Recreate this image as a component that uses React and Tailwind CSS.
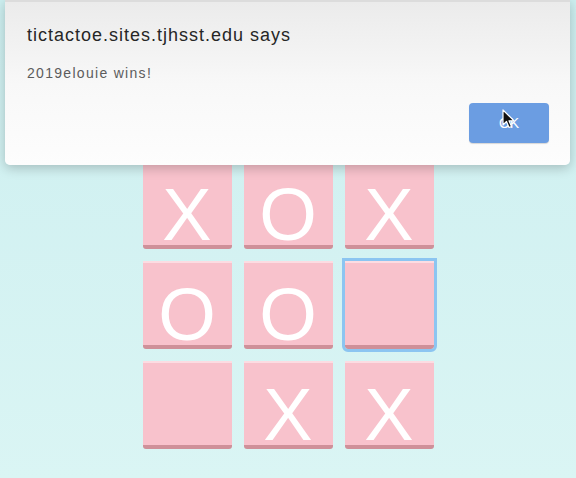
import React from 'react'

const BOARD = ['X', 'O', 'X', 'O', 'O', '', '', 'X', 'X']
const FOCUSED = 5

function Cell({ mark, focused }) {
  return (
    <button
      className={`w-[89px] h-[88px] flex justify-center bg-[#f8c2cc] border-t-2 border-t-[#fcdce2] border-b-4 border-b-[#cf9099] rounded-b-[3px] ${focused ? 'outline-[3px] outline-solid outline-[#8cc5f1]' : ''}`}
    >
      <span className="pt-[15px] text-[74px] leading-none text-white" style={{ fontFamily: '"Liberation Sans", Arial, sans-serif' }}>
        {mark}
      </span>
    </button>
  )
}

function Cursor() {
  return (
    <svg className="absolute left-[502px] top-[109px]" width="14" height="21" viewBox="0 0 14 21">
      <path d="M1 1 L1 16 L4.5 12.5 L7 18.5 L9.5 17.5 L7 11.8 L12 11.8 Z" fill="#111" stroke="#fff" strokeWidth="1.2" strokeLinejoin="round" />
    </svg>
  )
}

export default function App() {
  return (
    <div className="relative w-full h-[478px] overflow-hidden bg-gradient-to-b from-[#cdeff0] to-[#daf5f4]">
      {/* board */}
      <div className="flex justify-center pt-[161px]">
        <div className="grid grid-cols-[repeat(3,89px)] gap-x-[12px] gap-y-[12px]">
          {BOARD.map((m, i) => (
            <Cell key={i} mark={m} focused={i === FOCUSED} />
          ))}
        </div>
      </div>

      {/* alert dialog */}
      <div
        className="absolute left-[5px] right-[6px] top-0 h-[165px] rounded-b-[5px] bg-gradient-to-b from-[#ebebeb] via-[#f8f8f8] to-[#fdfdfd] border-t-2 border-[#dcdcdc] shadow-[0_3px_12px_rgba(0,0,0,0.22)]"
        style={{ fontFamily: '"Liberation Sans", Arial, sans-serif' }}
      >
        <div className="pl-[22px] pt-[22px] text-[18px] leading-[22px] tracking-[1px] text-[#262626]">
          tictactoe.sites.tjhsst.edu says
        </div>
        <div className="pl-[22px] pt-[18px] text-[14px] leading-[18px] tracking-[1.3px] text-[#5c5c5c]">
          2019elouie wins!
        </div>
        <div className="flex justify-end pr-[21px] pt-[21px]">
          <button className="w-[80px] h-[40px] rounded-[4px] bg-[#6b9de2] text-white text-[14px] shadow-[0_1px_1px_rgba(0,0,0,0.15)]">
            OK
          </button>
        </div>
      </div>

      <Cursor />
    </div>
  )
}
